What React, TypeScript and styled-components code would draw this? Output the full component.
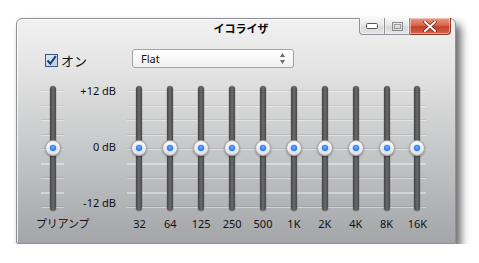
import React from "react";
import styled, { createGlobalStyle } from "styled-components";

const Global = createGlobalStyle`
  html, body { margin: 0; padding: 0; background: #ffffff; }
  body { font-family: "Noto Sans", "Noto Sans CJK JP", sans-serif; }
  #root { padding: 18px 0 0 16px; }
`;

const Window = styled.div`
  width: 440px;
  height: 226px;
  box-sizing: border-box;
  border: 1px solid #8e9093;
  border-radius: 6px 6px 2px 2px;
  background: linear-gradient(#f1f1f1 0%, #e4e4e4 22%, #c9cacb 55%, #a3a5a8 100%);
  box-shadow: 5px 6px 9px rgba(0, 0, 0, 0.6), inset 1px 1px 0 rgba(255,255,255,0.8);
  display: flex;
  flex-direction: column;
`;

const TitleBar = styled.div`
  height: 22px;
  display: grid;
  grid-template-columns: 1fr auto 1fr;
  align-items: start;
`;

const Title = styled.div`
  grid-column: 2;
  margin: 1px 0 0 10px;
  font-family: "Noto Sans CJK JP", sans-serif;
  font-weight: 700;
  font-size: 11px;
  line-height: 16px;
  color: #000;
`;

const Caption = styled.div`
  grid-column: 3;
  justify-self: end;
  margin: -1px 4px 0 0;
  display: flex;
  height: 17px;
`;

const CapButton = styled.div<{ $w: number; $close?: boolean; $first?: boolean; $last?: boolean }>`
  width: ${(p) => p.$w}px;
  height: 17px;
  box-sizing: border-box;
  display: flex;
  align-items: center;
  justify-content: center;
  border: 1px solid ${(p) => (p.$close ? "#8b3a2c" : "#8f9296")};
  border-left-width: ${(p) => (p.$first ? 1 : 0)}px;
  border-top: none;
  border-radius: ${(p) => (p.$first ? "0 0 0 4px" : p.$last ? "0 0 4px 0" : "0")};
  background: ${(p) =>
    p.$close
      ? "linear-gradient(#e99a88 0%, #d9664e 45%, #c4402a 55%, #d5634c 100%)"
      : "linear-gradient(#f7f7f7 0%, #e8e8e8 45%, #d7d8da 55%, #e4e5e7 100%)"};
  box-shadow: inset 0 0 0 1px rgba(255, 255, 255, 0.45);
`;

const TopRow = styled.div`
  margin-top: 8px;
  height: 19px;
  display: flex;
  align-items: center;
  padding-left: 28px;
`;

const CheckLabel = styled.label`
  display: flex;
  align-items: center;
  gap: 3px;
  width: 87px;
  font-family: "Noto Sans CJK JP", sans-serif;
  font-size: 13px;
  color: #111;
  margin-top: 4px;
`;

const CheckBox = styled.span`
  width: 13px;
  height: 13px;
  box-sizing: border-box;
  border: 1px solid #3b5a7e;
  background: linear-gradient(135deg, #dfe9f5, #b8cde4);
  display: flex;
  align-items: center;
  justify-content: center;
`;

const Dropdown = styled.div`
  width: 162px;
  height: 19px;
  box-sizing: border-box;
  border: 1px solid #a3a3a3;
  border-radius: 3px;
  background: linear-gradient(#ffffff, #f0f0f0);
  display: flex;
  align-items: center;
  justify-content: space-between;
  padding: 0 8px 0 8px;
  font-size: 11px;
  color: #111;
`;

const SliderGrid = styled.div`
  margin-top: 18px;
  padding-left: 19px;
  display: grid;
  grid-template-columns: 41px 47px repeat(10, 30.9px);
  grid-template-rows: 125px auto;
`;

const Lines = styled.div<{ $col: string; $ml: number; $w?: number; $mr?: number }>`
  grid-row: 1;
  grid-column: ${(p) => p.$col};
  margin-left: ${(p) => p.$ml}px;
  margin-right: ${(p) => p.$mr ?? 0}px;
  ${(p) => (p.$w ? `width: ${p.$w}px;` : "")}
  background-image: repeating-linear-gradient(
    to bottom,
    transparent 0px,
    transparent 4px,
    rgba(0, 0, 0, 0.08) 4px,
    rgba(0, 0, 0, 0.08) 5px,
    rgba(255, 255, 255, 0.4) 5px,
    rgba(255, 255, 255, 0.4) 6px,
    transparent 6px,
    transparent 14.5px
  );
`;

const SliderCell = styled.div<{ $col: number; $ml?: number; $w?: number }>`
  grid-row: 1;
  grid-column: ${(p) => p.$col};
  display: flex;
  justify-content: center;
  margin-left: ${(p) => p.$ml ?? 0}px;
  ${(p) => (p.$w ? `width: ${p.$w}px;` : "")}
  z-index: 1;
`;

const Track = styled.div`
  position: relative;
  width: 6px;
  height: 125px;
  border-radius: 3px;
  background: linear-gradient(to right, #454545, #6a6a6a 50%, #4a4a4a);
  box-shadow: 0 0 0 0.5px rgba(0, 0, 0, 0.2);
`;

const Thumb = styled.div`
  position: absolute;
  left: 50%;
  width: 16px;
  height: 16px;
  margin-left: -8px;
  border-radius: 50%;
  box-sizing: border-box;
  border: 1px solid rgba(100, 100, 100, 0.5);
  background: radial-gradient(circle at 50% 35%, #ffffff 0%, #f3f3f3 45%, #cdcdcd 100%);
  box-shadow: 0 1px 2px rgba(0, 0, 0, 0.35);
  display: flex;
  align-items: center;
  justify-content: center;
`;

const Dot = styled.div`
  width: 6px;
  height: 6px;
  border-radius: 50%;
  background: radial-gradient(circle at 50% 45%, #7dbcff 0%, #1f72f5 60%, #3a80e6 100%);
  box-shadow: 0 0 2px rgba(40, 110, 255, 0.8);
`;

const DbScale = styled.div`
  grid-row: 1;
  grid-column: 2;
  display: flex;
  flex-direction: column;
  justify-content: space-between;
  align-items: flex-end;
  padding: 0 8px 3px 0;
  font-size: 11px;
  line-height: 10px;
  color: #111;
  white-space: nowrap;
`;

const BandLabel = styled.div<{ $col: number; $start?: boolean }>`
  grid-row: 2;
  grid-column: ${(p) => p.$col};
  justify-self: ${(p) => (p.$start ? "start" : "center")};
  margin-top: 6px;
  font-size: 11px;
  line-height: 14px;
  color: #111;
  white-space: nowrap;
`;

const PreLabel = styled(BandLabel)`
  font-family: "Noto Sans CJK JP", sans-serif;
  font-size: 11px;
  letter-spacing: -0.2px;
  margin-top: 5px;
`;

const Slider = () => (
  <Track>
    <Thumb style={{ top: 54 }}>
      <Dot />
    </Thumb>
  </Track>
);

const bands = ["32", "64", "125", "250", "500", "1K", "2K", "4K", "8K", "16K"];

export default function App() {
  return (
    <>
      <Global />
      <Window>
        <TitleBar>
          <Title>イコライザ</Title>
          <Caption>
            <CapButton $w={26} $first>
              <svg width="12" height="6" viewBox="0 0 12 6">
                <rect x="0.5" y="0.5" width="11" height="5" rx="1" fill="#fff" stroke="#555" />
              </svg>
            </CapButton>
            <CapButton $w={25}>
              <svg width="11" height="9" viewBox="0 0 11 9">
                <rect x="0.5" y="0.5" width="10" height="8" fill="none" stroke="#8a8a8a" />
                <rect x="2.5" y="2.5" width="6" height="4" fill="none" stroke="#9a9a9a" />
              </svg>
            </CapButton>
            <CapButton $w={41} $close $last>
              <svg width="14" height="11" viewBox="0 0 14 11">
                <path d="M2 1 L12 10 M12 1 L2 10" stroke="#6b2418" strokeWidth="3.4" strokeLinecap="round" />
                <path d="M2 1 L12 10 M12 1 L2 10" stroke="#ffffff" strokeWidth="2" strokeLinecap="round" />
              </svg>
            </CapButton>
          </Caption>
        </TitleBar>

        <TopRow>
          <CheckLabel>
            <CheckBox>
              <svg width="11" height="11" viewBox="0 0 11 11">
                <path d="M1.5 5.5 L4.3 8.6 L9.8 1.2" fill="none" stroke="#1e3f6e" strokeWidth="2" />
              </svg>
            </CheckBox>
            オン
          </CheckLabel>
          <Dropdown>
            <span>Flat</span>
            <svg width="5" height="11" viewBox="0 0 5 11">
              <path d="M2.5 0 L5 4 L0 4 Z" fill="#6c6c6c" />
              <path d="M0 7 L5 7 L2.5 11 Z" fill="#6c6c6c" />
            </svg>
          </Dropdown>
        </TopRow>

        <SliderGrid>
          <Lines $col="1" $ml={5} $w={23} />
          <SliderCell $col={1} $ml={5} $w={23}>
            <Slider />
          </SliderCell>
          <DbScale>
            <span>+12 dB</span>
            <span>0 dB</span>
            <span>-12 dB</span>
          </DbScale>
          <Lines $col="3 / 13" $ml={3} $mr={7} />
          {bands.map((b, i) => (
            <SliderCell key={b} $col={i + 3}>
              <Slider />
            </SliderCell>
          ))}
          <PreLabel $col={1} $start>
            プリアンプ
          </PreLabel>
          {bands.map((b, i) => (
            <BandLabel key={b} $col={i + 3}>
              {b}
            </BandLabel>
          ))}
        </SliderGrid>
      </Window>
    </>
  );
}
